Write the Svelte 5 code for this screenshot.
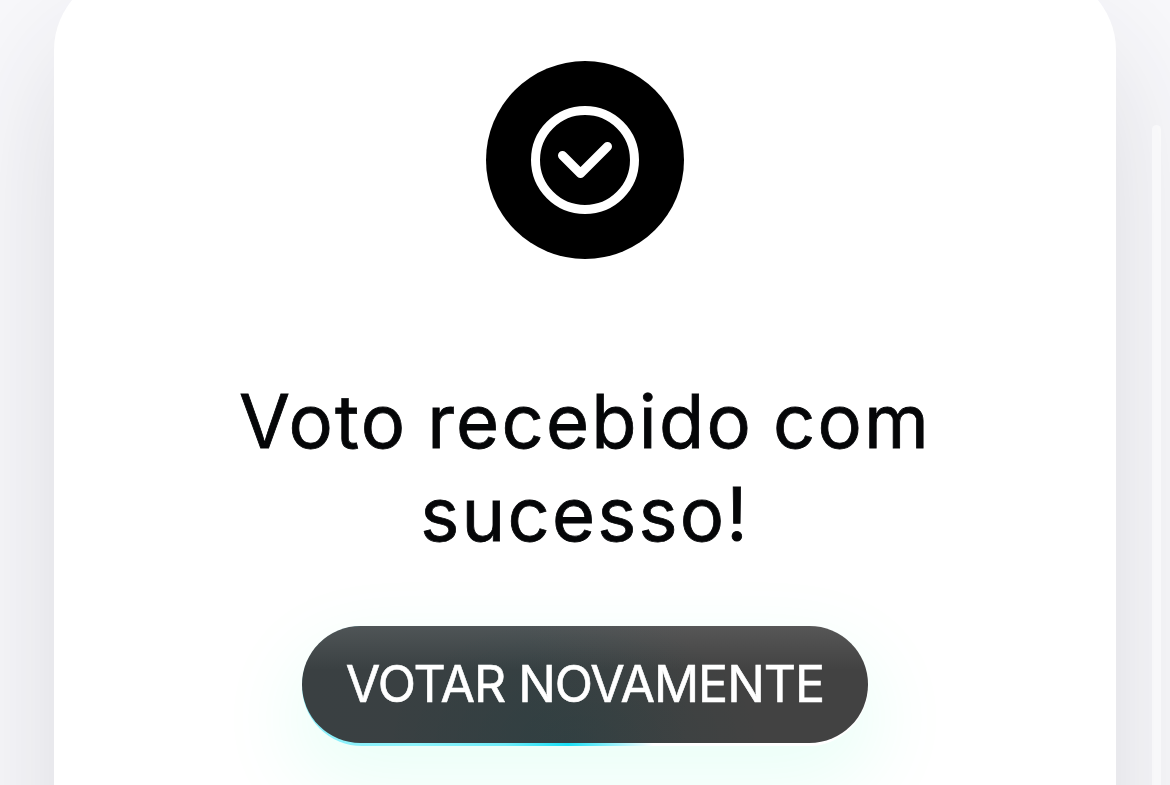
<script>
    export let message = 'Voto recebido com sucesso!';
    export let action = 'VOTAR NOVAMENTE';
</script>

<main class="page">
    <section class="card">
        <div class="badge">
            <svg viewBox="0 0 24 24" fill="none" stroke="white" stroke-width="2" stroke-linecap="round" stroke-linejoin="round">
                <circle cx="12" cy="12" r="11" />
                <path d="M7 11L11 15L17 9" />
            </svg>
        </div>
        <h1>{message}</h1>
        <div class="glow">
            <button>{action}</button>
        </div>
    </section>
    <div class="scrollbar"></div>
</main>

<style>
    :global(body) {
        overflow: hidden;
    }

    .page {
        display: flex;
        box-sizing: border-box;
        width: 1170px;
        height: 785px;
        padding-left: 54px;
        overflow: hidden;
        background: #f8f8fb;
    }

    .card {
        display: flex;
        flex-direction: column;
        align-items: center;
        flex: none;
        box-sizing: border-box;
        width: 1062px;
        height: 1000px;
        margin-top: -28px;
        padding: 89px 150px 0;
        border-radius: 78px;
        background: white;
        box-shadow: 0 70px 130px rgba(40, 40, 60, 0.14);
    }

    .badge {
        display: flex;
        align-items: center;
        justify-content: center;
        flex: none;
        width: 198px;
        height: 198px;
        border-radius: 50%;
        background: black;
    }

    .badge svg {
        width: 108px;
        height: 108px;
    }

    h1 {
        width: 740px;
        margin: 116px 0 0;
        font: 400 74px/93px Inter, sans-serif;
        letter-spacing: 2.2px;
        word-spacing: -3px;
        text-align: center;
        color: #050608;
        -webkit-text-stroke: 0.8px #050608;
    }

    /* coloured rim that shows below the pill */
    .glow {
        flex: none;
        width: 566px;
        height: 120px;
        margin-top: 65px;
        border-radius: 60px;
        background: linear-gradient(90deg, #8ceffa, #8df3fb 20%, #6eebf8 36%, #19dff5 47%, white 62%);
        box-shadow: 0 32px 80px 12px rgba(0, 255, 170, 0.08);
    }

    button {
        display: block;
        width: 566px;
        height: 117px;
        padding: 0;
        border: none;
        border-radius: 59px;
        background:
            linear-gradient(rgba(255, 255, 255, 0.11), transparent 38%),
            radial-gradient(ellipse 190px 130px at 48% 100%, rgba(0, 60, 65, 0.16), transparent),
            linear-gradient(90deg, #3a4042, #394042 40%, #424242 68%);
        font: 400 50px/117px Inter, sans-serif;
        letter-spacing: -1px;
        color: white;
        -webkit-text-stroke: 0.6px white;
        white-space: nowrap;
        cursor: pointer;
    }

    .scrollbar {
        position: relative;
        flex: none;
        width: 9px;
        height: 760px;
        margin: 125px 0 0 36px;
        border-radius: 5px;
        background: rgba(255, 255, 255, 0.5);
    }
</style>
